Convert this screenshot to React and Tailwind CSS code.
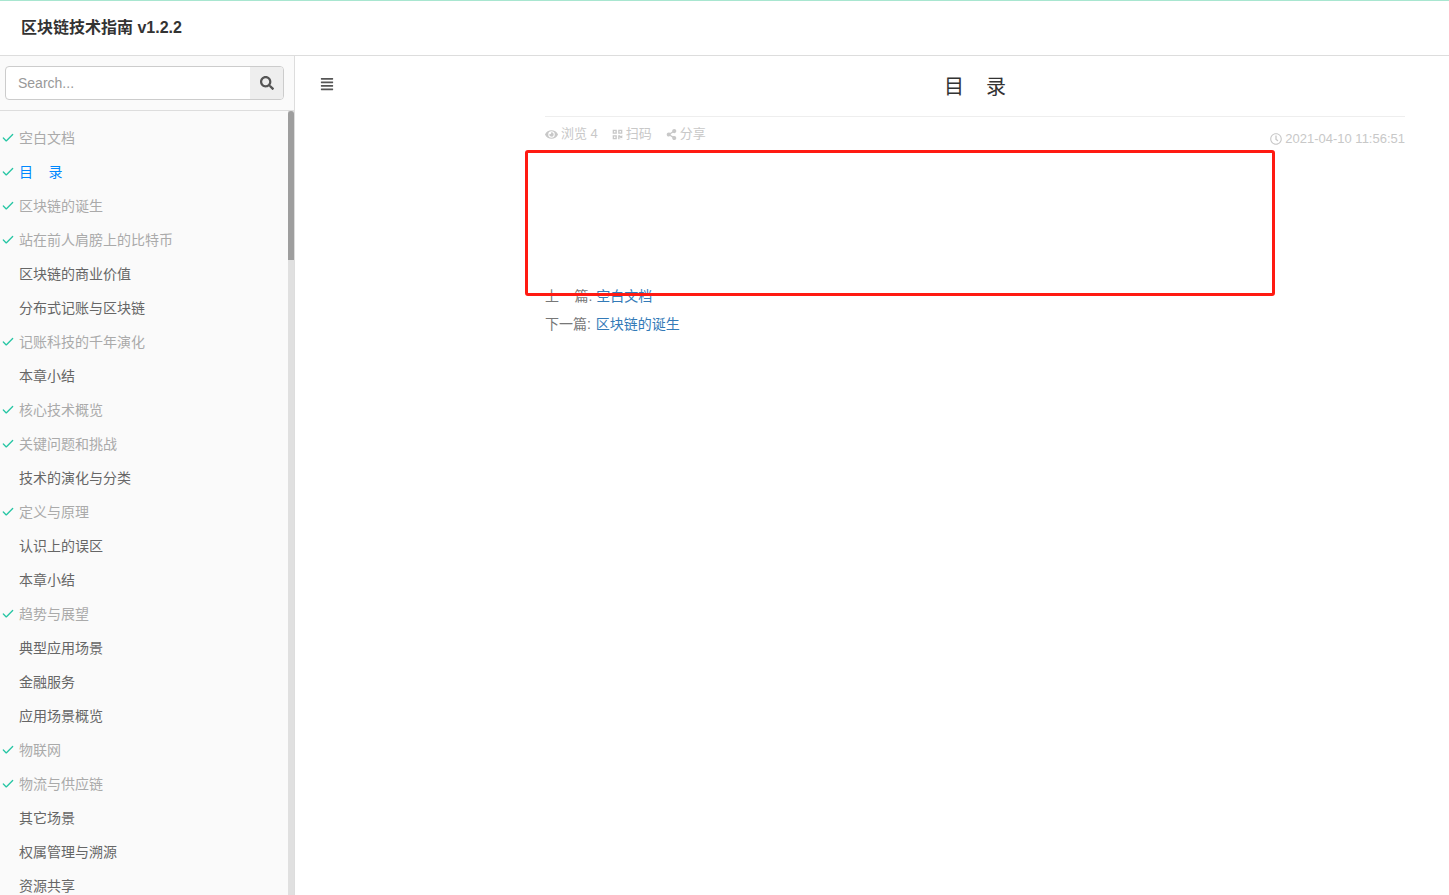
import { Check } from 'lucide-react'
import { FaAlignJustify, FaEye, FaQrcode, FaRegClock, FaSearch, FaShareAlt } from 'react-icons/fa'

const gap = '\u00a0\u00a0\u00a0\u00a0'

const chapters = [
  { name: '空白文档', read: true },
  { name: `目${gap}录`, read: true, active: true },
  { name: '区块链的诞生', read: true },
  { name: '站在前人肩膀上的比特币', read: true },
  { name: '区块链的商业价值' },
  { name: '分布式记账与区块链' },
  { name: '记账科技的千年演化', read: true },
  { name: '本章小结' },
  { name: '核心技术概览', read: true },
  { name: '关键问题和挑战', read: true },
  { name: '技术的演化与分类' },
  { name: '定义与原理', read: true },
  { name: '认识上的误区' },
  { name: '本章小结' },
  { name: '趋势与展望', read: true },
  { name: '典型应用场景' },
  { name: '金融服务' },
  { name: '应用场景概览' },
  { name: '物联网', read: true },
  { name: '物流与供应链', read: true },
  { name: '其它场景' },
  { name: '权属管理与溯源' },
  { name: '资源共享' },
]

function ChapterRow({ chapter }) {
  const color = chapter.active ? 'text-[#0088ff]' : chapter.read ? 'text-[#aaaaaa]' : 'text-[#666666]'
  return (
    <li className="relative flex h-[34px] items-center pl-[19px]">
      {chapter.read && (
        <Check size={14} strokeWidth={2.25} className="absolute left-[1px] top-[10px] text-[#26c6a4]" />
      )}
      <span className={`text-[14px] ${color}`}>{chapter.name}</span>
    </li>
  )
}

export default function App() {
  return (
    <div className="relative flex h-[895px] flex-col overflow-hidden bg-white font-['Liberation_Sans','Noto_Sans_CJK_SC',sans-serif]">
      <header className="flex h-[56px] shrink-0 items-center border-t border-b border-t-[#a8e6d0] border-b-[#dddddd] pl-[21px] pb-[1px]">
        <h1 className="text-[16px] font-bold text-[#333333]">区块链技术指南 v1.2.2</h1>
      </header>

      <div className="flex min-h-0 flex-1">
        <aside className="flex w-[295px] shrink-0 flex-col border-r border-[#dddddd] bg-[#fafafa]">
          <div className="h-[55px] shrink-0 border-b border-[#dddddd] pl-[5px] pr-[10px] pt-[10px] pb-[10px]">
            <div className="flex h-[34px] overflow-hidden rounded border border-[#cccccc] bg-white">
              <span className="flex-1 pl-3 text-[14px] leading-[32px] text-[#999999]">Search...</span>
              <span className="flex w-[33px] items-center justify-center bg-[#eeeeee]">
                <FaSearch size={14} className="text-[#555555]" />
              </span>
            </div>
          </div>
          <div className="flex min-h-0 flex-1">
            <ul className="flex-1 overflow-hidden pt-[10px]">
              {chapters.map((chapter, i) => (
                <ChapterRow key={i} chapter={chapter} />
              ))}
            </ul>
            <div className="w-[6px] shrink-0 bg-[#e0e0e0]">
              <div className="h-[149px] rounded-t-[3px] bg-[#9e9e9e]" />
            </div>
          </div>
        </aside>

        <main className="flex min-w-0 flex-1 pt-[10px]">
          <div className="w-[250px] shrink-0 pl-[25px] pt-[11px]">
            <FaAlignJustify size={14} className="text-[#555555]" />
          </div>
          <article className="w-[860px] shrink-0">
            <h2 className="flex h-[51px] items-center justify-center border-b border-[#eeeeee] pb-[9px] text-[20px] text-[#333333]">目{gap}录</h2>
            <div className="flex justify-between pt-[8px] text-[13px] leading-[18px] text-[#c8c8c8]">
              <div className="flex items-center self-start">
                <FaEye size={13} className="mr-[3px]" />
                <span>浏览 4</span>
                <FaQrcode size={11} className="ml-[14px] mr-[3px]" />
                <span>扫码</span>
                <FaShareAlt size={11} className="ml-[14px] mr-[3px]" />
                <span>分享</span>
              </div>
              <div className="mt-[5px] flex items-center">
                <FaRegClock size={12} className="mr-[3px]" />
                <span>2021-04-10 11:56:51</span>
              </div>
            </div>
            <div className="mt-[138px] flex flex-col gap-[8px] text-[14px] text-[#777777]">
              <p className="leading-[20px]">上{gap}篇: <a className="text-[#337ab7]">空白文档</a></p>
              <p className="leading-[20px]">下一篇: <a className="ml-[1px] text-[#337ab7]">区块链的诞生</a></p>
            </div>
          </article>
        </main>
      </div>

      {/* red annotation drawn over the page */}
      <div className="absolute left-[525px] top-[150px] h-[146px] w-[750px] rounded-[3px] border-[3px] border-[#ff1a12]" />
    </div>
  )
}
